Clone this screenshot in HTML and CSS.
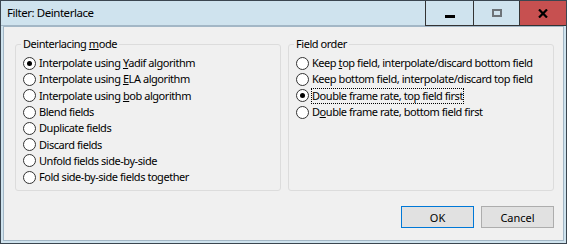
FILE: index.html
```html
<!DOCTYPE html>
<html lang="en">
<head>
  <meta charset="UTF-8" />
  <title>Filter: Deinterlace</title>
  <link rel="stylesheet" href="styles.css">
</head>
<body>

<div class="window">
  <div class="titlebar">
    <div class="title">Filter: Deinterlace</div>
    <div class="cap-btns">
      <div class="cap-btn min"><span class="min-bar"></span></div>
      <div class="cap-btn max"><span class="max-box"></span></div>
      <div class="cap-btn close">
        <svg width="10" height="9" viewBox="0 0 10 9">
          <path d="M1 0.5 L9 8.5 M9 0.5 L1 8.5" stroke="#000" stroke-width="2.2" fill="none"/>
        </svg>
      </div>
    </div>
  </div>

  <div class="client">
    <div class="groups">
      <fieldset class="group">
        <legend>Deinterlacing <u>m</u>ode</legend>
        <div class="radio checked"><span class="circle"></span><span class="label">Interpolate using <u>Y</u>adif algorithm</span></div>
        <div class="radio"><span class="circle"></span><span class="label">Interpolate using <u>E</u>LA algorithm</span></div>
        <div class="radio"><span class="circle"></span><span class="label">Interpolate using <u>b</u>ob algorithm</span></div>
        <div class="radio"><span class="circle"></span><span class="label">Blend fields</span></div>
        <div class="radio"><span class="circle"></span><span class="label">Duplicate fields</span></div>
        <div class="radio"><span class="circle"></span><span class="label">Discard fields</span></div>
        <div class="radio"><span class="circle"></span><span class="label">Unfold fields side-by-side</span></div>
        <div class="radio"><span class="circle"></span><span class="label">Fold side-by-side fields together</span></div>
      </fieldset>

      <fieldset class="group right">
        <legend>Field order</legend>
        <div class="radio"><span class="circle"></span><span class="label">Keep <u>t</u>op field, interpolate/discard bottom field</span></div>
        <div class="radio"><span class="circle"></span><span class="label">Keep bottom field, interpolate/discard top field</span></div>
        <div class="radio checked"><span class="circle"></span><span class="label focus">Double frame rate, top field first</span></div>
        <div class="radio"><span class="circle"></span><span class="label">D<u>o</u>uble frame rate, bottom field first</span></div>
      </fieldset>
    </div>

    <div class="actions">
      <button class="btn default">OK</button>
      <button class="btn">Cancel</button>
    </div>
  </div>
</div>

</body>
</html>
```

FILE: styles.css
```css
body {
  margin: 0;
  font-family: 'Noto Sans', sans-serif;
  font-size: 11px;
  letter-spacing: -0.45px;
  color: #000;
}
.window {
  width: 567px;
  height: 244px;
  box-sizing: border-box;
  border: 1px solid #3b4650;
  background: #cfe3ee;
  display: flex;
  flex-direction: column;
}
.titlebar {
  height: 24px;
  display: flex;
  border-bottom: 1px solid #a3b7c6;
}
.title {
  flex: 1;
  padding-left: 6px;
  line-height: 24px;
  font-size: 11.5px;
}
.cap-btns {
  display: flex;
}
.cap-btn {
  box-sizing: border-box;
  height: 25px;
  border-left: 1px solid #333;
  border-bottom: 1px solid #333;
  display: flex;
  align-items: center;
  justify-content: center;
}
.min { width: 48px; }
.max { width: 46px; }
.close {
  width: 47px;
  background: #c75050;
}
.min-bar {
  width: 10px;
  height: 3px;
  background: #000;
  margin-top: 6px;
}
.max-box {
  width: 6px;
  height: 4px;
  border: 2px solid #6d7378;
}
.client {
  flex: 1;
  margin: 0 2px 2px;
  background: #f0f0f0;
  border: 1px solid #a3b7c6;
  padding: 10px 9px 0 11px;
}
.groups {
  display: flex;
  gap: 7px;
}
.group {
  margin: 0;
  width: 266px;
  box-sizing: border-box;
  border: 1px solid #dcdcdc;
  border-radius: 3px;
  padding: 4px 0 5px 7px;
}
.group legend {
  padding: 0 2px;
  margin-left: -2px;
  line-height: 14px;
}
.radio {
  height: 16.3px;
  display: flex;
  align-items: center;
  white-space: nowrap;
}
.circle {
  width: 11px;
  height: 11px;
  border: 1px solid #333;
  border-radius: 50%;
  background: #fff;
  margin-right: 3px;
  flex: none;
  display: flex;
  align-items: center;
  justify-content: center;
}
.checked .circle::after {
  content: "";
  width: 5px;
  height: 5px;
  border-radius: 50%;
  background: #000;
}
.label {
  line-height: 14px;
}
.focus {
  outline: 1px dotted #000;
  outline-offset: 0;
}
.actions {
  display: flex;
  justify-content: flex-end;
  gap: 7px;
  margin-top: 15px;
}
.btn {
  width: 73px;
  height: 22px;
  font: inherit;
  background: #e1e1e1;
  border: 1px solid #adadad;
  padding: 0;
}
.btn.default {
  border-color: #0078d7;
}
```
